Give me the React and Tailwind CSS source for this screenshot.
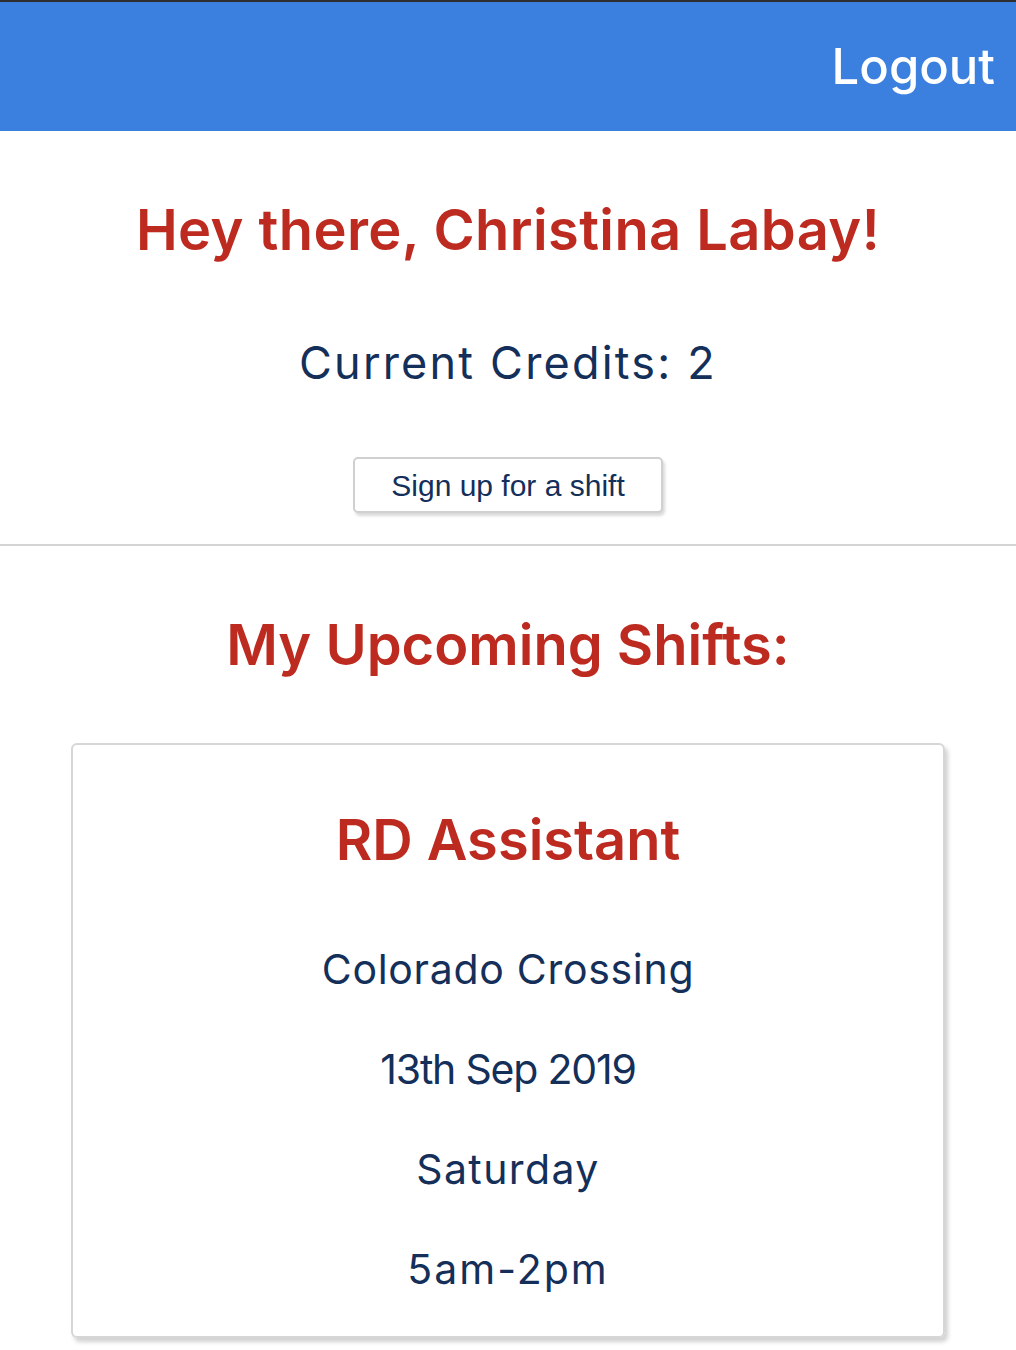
const shift = {
  title: "RD Assistant",
  location: "Colorado Crossing",
  date: "13th Sep 2019",
  day: "Saturday",
  time: "5am-2pm",
};

const ShiftCard = ({ shift }) => {
  return (
    <div className="mx-[71px] mt-[63px] border-2 border-[#d6d6d6] rounded-md shadow-[3px_4px_4px_rgba(0,0,0,0.18)] pt-[60px] pb-[42px] flex flex-col items-center">
      <h3 className="text-[56px] leading-[70px] font-semibold text-[#bd2a1f]">{shift.title}</h3>
      <p className="mt-[70px] text-[41px] leading-[49px] tracking-[0.7px] text-[#142f59]">{shift.location}</p>
      <p className="mt-[51px] text-[41px] leading-[49px] tracking-[-1.2px] text-[#142f59]">{shift.date}</p>
      <p className="mt-[51px] text-[41px] leading-[49px] tracking-[1.4px] text-[#142f59]">{shift.day}</p>
      <p className="mt-[51px] text-[41px] leading-[49px] tracking-[2px] text-[#142f59]">{shift.time}</p>
    </div>
  );
};

const App = () => {
  return (
    <div className="min-h-screen bg-white font-['Inter',sans-serif]">
      <header className="h-[131px] bg-[#3b80df] border-t-2 border-[#2e2e2e] flex items-center justify-end pr-[21px]">
        <button className="text-white text-[49px] font-medium leading-none">Logout</button>
      </header>

      <section className="flex flex-col items-center text-center pb-[31px] border-b-2 border-[#d4d4d4]">
        <h1 className="mt-[64px] text-[56px] leading-[70px] tracking-[0.4px] font-semibold text-[#bd2a1f]">
          Hey there, Christina Labay!
        </h1>
        <h2 className="mt-[71px] text-[45px] leading-[54px] tracking-[2.2px] text-[#142f59]">Current Credits: 2</h2>
        <button className="mt-[67px] w-[310px] h-[56px] bg-white border-2 border-[#d0d0d0] rounded-[5px] shadow-[2px_3px_3px_rgba(0,0,0,0.15)] text-[30px] text-[#142f59] font-['Liberation_Sans',sans-serif]">
          Sign up for a shift
        </button>
      </section>

      <section className="pb-[12px]">
        <h2 className="mt-[64px] text-center text-[56px] leading-[70px] font-semibold text-[#bd2a1f]">
          My Upcoming Shifts:
        </h2>
        <ShiftCard shift={shift} />
      </section>
    </div>
  );
};

export default App;
